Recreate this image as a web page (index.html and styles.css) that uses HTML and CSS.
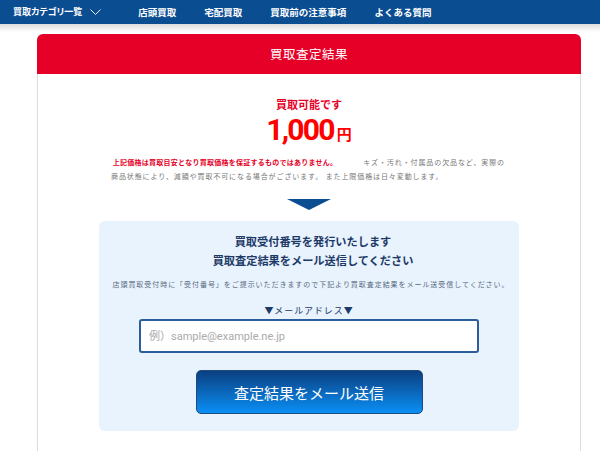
FILE: index.html
```html
<!DOCTYPE html>
<html lang="ja">
<head>
    <meta charset="UTF-8">
    <meta name="viewport" content="width=device-width, initial-scale=1.0">
    <title>買取査定結果</title>
    <link rel="stylesheet" href="styles.css">
</head>
<body>
    <header class="global-nav">
        <a href="#" class="nav-category">買取カテゴリ一覧
            <svg class="chevron" width="11" height="6" viewBox="0 0 11 6"><polyline points="0.5,0.5 5.5,5.5 10.5,0.5" fill="none" stroke="#ffffff" stroke-width="0.9"/></svg>
        </a>
        <a href="#">店頭買取</a>
        <a href="#">宅配買取</a>
        <a href="#">買取前の注意事項</a>
        <a href="#">よくある質問</a>
    </header>
    <div class="nav-shadow"></div>

    <div class="result-card">
        <div class="result-head">買取査定結果</div>
        <div class="result-body">
            <p class="price-label">買取可能です</p>
            <p class="price"><span class="price-num">1,000</span><span class="price-yen">円</span></p>
            <p class="price-note"><strong>&nbsp;上記価格は買取目安となり買取価格を保証するものではありません。</strong>キズ・汚れ・付属品の欠品など、実際の<br>商品状態により、減額や買取不可になる場合がございます。 また上限価格は日々変動します。</p>
            <div class="down-arrow"></div>

            <div class="mail-box">
                <h2>買取受付番号を発行いたします<br>買取査定結果をメール送信してください</h2>
                <p class="mail-note">店頭買取受付時に「受付番号」をご提示いただきますので下記より買取査定結果をメール送受信してください。</p>
                <label class="mail-label" for="mail">▼メールアドレス▼</label>
                <input class="mail-input" id="mail" type="email" placeholder="例）sample@example.ne.jp">
                <button class="send-btn">査定結果をメール送信</button>
            </div>
        </div>
    </div>
</body>
</html>
```

FILE: styles.css
```css
body {
    margin: 0;
    font-family: "Noto Sans CJK JP", "Noto Sans", sans-serif;
    background-color: #ffffff;
    color: #333333;
}
.global-nav {
    height: 24px;
    background-color: #0b4d91;
    display: flex;
    align-items: center;
    padding-left: 13px;
}
.global-nav a {
    color: #ffffff;
    text-decoration: none;
    font-size: 9.5px;
    font-weight: bold;
    line-height: 24px;
    margin-right: 28px;
}
.global-nav .nav-category {
    display: flex;
    align-items: center;
    font-size: 9px;
    font-feature-settings: "palt";
    margin-right: 37px;
}
.chevron {
    margin-left: 8px;
}
.nav-shadow {
    height: 8px;
    background: linear-gradient(to bottom, #dcdcdc, #ffffff);
}
.result-card {
    width: 544px;
    margin: 2px 0 0 37px;
    box-sizing: border-box;
    border: 1px solid #dddddd;
    border-bottom: none;
    border-radius: 6px 6px 0 0;
    min-height: 420px;
}
.result-head {
    height: 40px;
    margin: -1px -1px 0;
    background-color: #e60028;
    border-radius: 6px 6px 0 0;
    color: #ffffff;
    font-size: 12.5px;
    letter-spacing: 0.5px;
    text-align: center;
    line-height: 40px;
}
.result-body {
    padding-top: 23px;
    display: flex;
    flex-direction: column;
    align-items: center;
}
.price-label {
    margin: 0 0 1px;
    color: #e60028;
    font-size: 11px;
    font-weight: bold;
    line-height: 14px;
}
.price {
    margin: 0;
    color: #ff0000;
    font-weight: bold;
    line-height: 35px;
    height: 35px;
}
.price-num {
    font-family: Roboto, "Liberation Sans", sans-serif;
    font-size: 30px;
    letter-spacing: -1.7px;
}
.price-yen {
    font-size: 15px;
    margin-left: 3px;
}
.price-note {
    width: 400px;
    margin: 8px 0 0;
    padding-left: 4px;
    font-size: 7px;
    line-height: 14px;
    color: #777777;
    letter-spacing: 0.9px;
}
.price-note strong {
    color: #e60028;
    letter-spacing: 0.25px;
    margin-right: 26px;
}
.down-arrow {
    width: 0;
    height: 0;
    margin-top: 16px;
    border-left: 22px solid transparent;
    border-right: 22px solid transparent;
    border-top: 11px solid #0b4d91;
}
.mail-box {
    width: 420px;
    margin-top: 11px;
    box-sizing: border-box;
    padding: 11px 0 17px;
    background-color: #e8f3fe;
    border-radius: 6px;
    display: flex;
    flex-direction: column;
    align-items: center;
}
.mail-box h2 {
    margin: 0 0 0 8px;
    font-size: 11.2px;
    line-height: 19px;
    color: #1d3a66;
    text-align: center;
}
.mail-note {
    margin: 7px 0 0 4px;
    font-size: 7px;
    line-height: 14px;
    letter-spacing: 0.95px;
    color: #5a6a80;
}
.mail-label {
    margin-top: 13px;
    font-size: 9px;
    line-height: 14px;
    letter-spacing: 0.9px;
    color: #1d3a66;
}
.mail-input {
    margin-top: 1px;
    width: 340px;
    height: 34px;
    box-sizing: border-box;
    border: 2px solid #2b5d9a;
    border-radius: 3px;
    padding: 0 8px;
    font-family: Roboto, "Noto Sans CJK JP", sans-serif;
    font-size: 11px;
    background-color: #ffffff;
}
.mail-input::placeholder {
    color: #aaaaaa;
}
.send-btn {
    margin-top: 17px;
    width: 227px;
    height: 44px;
    border: 1px solid #1d4b80;
    border-radius: 5px;
    background: linear-gradient(to bottom, #0b3f80, #0a8ff5);
    color: #ffffff;
    font-family: "Noto Sans CJK JP", sans-serif;
    font-size: 15px;
}
```
